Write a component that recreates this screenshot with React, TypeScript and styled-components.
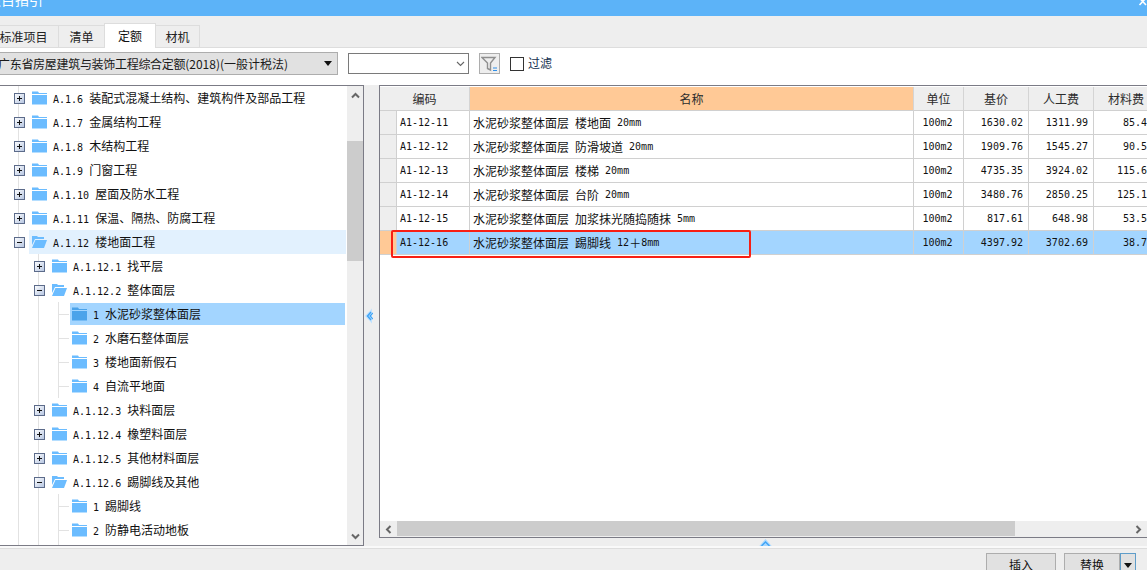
import React from "react";
import styled, { createGlobalStyle } from "styled-components";

const CJK = `"Noto Sans CJK SC", "Liberation Sans", sans-serif`;

const Global = createGlobalStyle`
  html, body { margin: 0; padding: 0; overflow: hidden; background: #eeeeee; }
  * { box-sizing: border-box; }
`;

const Page = styled.div`
  width: 1147px; height: 570px; overflow: hidden; display: flex; flex-direction: column;
  font-family: ${CJK}; font-size: 12px; color: #111; background: #eeeeee;
`;
const TitleBar = styled.div`
  flex: 0 0 16px; background: #5cb3f8; display: flex; justify-content: space-between; overflow: hidden;
`;
const TitleText = styled.div`
  color: #fff; font-size: 14px; line-height: 20px; margin: -11px 0 0 -13px; white-space: nowrap;
`;
const CloseMark = styled.svg`
  width: 9px; height: 7px; color: #fff;
`;
const TabStrip = styled.div`
  flex: 0 0 32px; display: flex; align-items: flex-end; margin-left: -12px;
  border-bottom: 1px solid #dddddd;
`;
const Tab = styled.div<{ $w: number; $active?: boolean }>`
  width: ${(p) => p.$w}px; height: ${(p) => (p.$active ? 25 : 22)}px;
  margin-bottom: ${(p) => (p.$active ? -1 : 0)}px;
  display: flex; align-items: center; justify-content: center; line-height: 20px;
  border: 1px solid #dddddd; border-bottom: none; margin-right: -1px;
  background: ${(p) => (p.$active ? "#fff" : "#eeeeee")};
  color: ${(p) => (p.$active ? "#111" : "#222")};
  position: relative;
`;
const Toolbar = styled.div`
  flex: 0 0 37px; background: #fff; display: flex; align-items: flex-start; padding-top: 4px;
`;
const Combo = styled.div`
  width: 339px; height: 23px; margin-left: -1px; background: #e1e1e1; border: 1px solid #adadad;
  display: flex; align-items: center; justify-content: space-between; padding: 0 4px 0 0; white-space: nowrap;
`;
const ComboText = styled.span` margin-left: -2px; color: #1a1a1a; `;
const ComboHead = styled.span` letter-spacing: -0.3px; `;
const Arrow = styled.svg` width: 8px; height: 5px; flex: none; margin-right: 1px; `;
const SelectBox = styled.div`
  width: 121px; height: 21px; margin: 1px 0 0 10px; background: #fff; border: 1px solid #7a7a7a;
  display: flex; align-items: center; justify-content: flex-end; padding-right: 3px;
`;
const FilterButton = styled.div`
  width: 21px; height: 21px; margin: 1px 0 0 10px; background: #eeeeee; border: 1px solid #adadad;
  display: flex; align-items: center; justify-content: center;
`;
const CheckBox = styled.div`
  width: 14px; height: 14px; margin: 5px 0 0 10px; background: #fff; border: 1px solid #333;
`;
const CheckLabel = styled.span` margin: 2px 0 0 4px; color: #14314f; `;

const Body = styled.div` flex: 0 0 461px; min-height: 0; overflow: hidden; display: flex; background: #eeeeee; `;
const LeftPanel = styled.div`
  width: 364px; flex: none; min-height: 0; display: flex; background: #fff; overflow: hidden;
  border-top: 1px solid #7b7b85; border-bottom: 1px solid #7b7b85; border-right: 1px solid #7b7b85;
`;
const Tree = styled.div`
  flex: 1; min-height: 0; padding: 0 1px 0 9px; overflow: hidden; display: flex; flex-direction: column;
`;
const Row = styled.div` flex: 0 0 24px; display: flex; align-items: stretch; `;
const Slot = styled.div<{ $branch?: boolean; $line?: boolean }>`
  width: 20px; flex: none; position: relative; display: flex; align-items: center; justify-content: center;
  &::before {
    content: ""; position: absolute; left: 9px; top: 0; bottom: 0; width: 1px;
    background: ${(p) => (p.$line ? "#e2e2e2" : "transparent")};
  }
  &::after {
    content: ""; position: absolute; left: 10px; right: 0; top: 12px; height: 1px;
    background: ${(p) => (p.$branch ? "#e2e2e2" : "transparent")};
  }
`;
const Toggle = styled.svg` width: 11px; height: 11px; position: relative; z-index: 1; `;
const Label = styled.div<{ $state?: "hover" | "selected"; $leaf?: boolean }>`
  flex: 1; display: flex; align-items: center; white-space: pre; gap: 6px;
  padding-left: ${(p) => (p.$leaf ? 2 : 3)}px; margin-left: ${(p) => (p.$leaf ? 1 : 0)}px;
  margin-top: ${(p) => (p.$state === "selected" ? 1 : 0)}px;
  margin-bottom: ${(p) => (p.$state === "selected" ? 1 : 0)}px;
  margin-right: ${(p) => (p.$state === "selected" ? 1 : 0)}px;
  background: ${(p) => (p.$state === "hover" ? "#e2f1fe" : p.$state === "selected" ? "#a3d5ff" : "transparent")};
`;
const TreeText = styled.span` margin-bottom: 2px; `;
const Folder = styled.svg` width: 15px; height: 14px; flex: none; `;
const Latin = styled.span`
  font-family: "DejaVu Sans Mono", "Liberation Mono", monospace; font-size: 10px; white-space: pre;
`;
const VScroll = styled.div`
  width: 16px; flex: none; background: #eeeeee; display: flex; flex-direction: column;
`;
const ScrollEnd = styled.div`
  flex: 0 0 18px; display: flex; align-items: center; justify-content: center;
`;
const VThumb = styled.div` flex: 0 0 120px; margin-top: 37px; margin-bottom: auto; background: #cccccc; `;
const Chevron = styled.svg` width: 9px; height: 9px; color: #666; `;

const Splitter = styled.div` width: 15px; flex: none; display: flex; align-items: center; `;
const RightColumn = styled.div` flex: 1; min-width: 0; min-height: 0; display: flex; flex-direction: column; `;
const RightPanel = styled.div`
  flex: 0 0 453px; display: flex; flex-direction: column; background: #fff; overflow: hidden;
  border-top: 1px solid #7b7b85; border-bottom: 1px solid #7b7b85; border-left: 1px solid #7b7b85;
  position: relative;
`;
const GridWrap = styled.div` flex: 1; min-height: 0; overflow: hidden; padding-top: 1px; `;
const GridTable = styled.div`
  display: grid; width: 779px;
  grid-template-columns: 17px 73px 444px 50px 65px 65px 65px;
  grid-auto-rows: 24px;
`;
const HeadCell = styled.div<{ $span?: number; $sort?: boolean }>`
  grid-column: span ${(p) => p.$span ?? 1};
  display: flex; align-items: center; justify-content: center; color: #2c2c2c;
  background: ${(p) => (p.$sort ? "#ffc996" : "#eeeeee")};
  border-right: 1px solid #d4d4d4; border-bottom: 1px solid #d0d0d0;
`;
const Marker = styled.div<{ $on?: boolean }>`
  background: ${(p) => (p.$on ? "#ffc996" : "#eeeeee")};
  border-right: 1px solid #d0d0d0; border-bottom: 1px solid #d0d0d0;
`;
const Cell = styled.div<{ $on?: boolean; $align?: "left" | "center" | "right" }>`
  display: flex; align-items: center; white-space: pre; padding: 0 5px 0 3px;
  justify-content: ${(p) => (p.$align === "right" ? "flex-end" : p.$align === "center" ? "center" : "flex-start")};
  background: ${(p) => (p.$on ? "#a3d5ff" : "#fff")};
  border-right: 1px solid #d0d0d0; border-bottom: 1px solid #d0d0d0;
`;
const RedMark = styled.div`
  position: absolute; left: 11px; top: 144px; width: 360px; height: 28px;
  border: 2px solid #f81f14; border-radius: 2px; pointer-events: none;
`;
const HScroll = styled.div` flex: 0 0 16px; display: flex; background: #eeeeee; `;
const HEnd = styled.div` flex: 0 0 17px; display: flex; align-items: center; justify-content: center; `;
const HThumb = styled.div` flex: 0 0 618px; height: 15px; background: #cccccc; margin-right: auto; `;
const BottomGrip = styled.div` flex: 1; min-height: 0; display: flex; justify-content: center; overflow: hidden; `;
const GripArrow = styled.svg` width: 15px; height: 9px; margin-top: 0; margin-left: 4px; flex: none; `;

const WhiteGap = styled.div` flex: 0 0 2px; background: #f9f9f9; `;
const Footer = styled.div`
  flex: 1; min-height: 0; border-top: 1px solid #dddddd; background: #eeeeee; display: flex; justify-content: flex-end;
  padding: 4px 11px 0 0; overflow: hidden;
`;
const Btn = styled.div<{ $w: number }>`
  width: ${(p) => p.$w}px; height: 23px; flex: none; background: #e1e1e1; border: 1px solid #adadad;
  display: flex; align-items: center; justify-content: center; color: #111;
`;
const SplitBtn = styled.div` display: flex; margin-left: 8px; `;
const DropBtn = styled.div`
  width: 16px; height: 23px; flex: none; background: #e1e1e1; border: 1px solid #5f9dc9;
  display: flex; align-items: flex-start; justify-content: center; padding-top: 9px;
`;

const Mixed = ({ text }: { text: string }) => (
  <>
    {text.split(/([\x00-\x7f]+)/).filter(Boolean).map((part, i) =>
      /^[\x00-\x7f]/.test(part) ? <Latin key={i}>{part}</Latin> : <span key={i}>{part}</span>
    )}
  </>
);

const ToggleIcon = ({ open }: { open: boolean }) => (
  <Toggle viewBox="0 0 11 11">
    <defs>
      <linearGradient id="tg" x1="0" y1="0" x2="1" y2="1">
        <stop offset="0" stopColor="#ffffff" />
        <stop offset="1" stopColor="#b4c4e0" />
      </linearGradient>
    </defs>
    <rect x="0.5" y="0.5" width="10" height="10" fill="url(#tg)" stroke="#5c6b8a" />
    <path d={open ? "M3 5.5h5" : "M3 5.5h5M5.5 3v5"} stroke="#111" fill="none" />
  </Toggle>
);

const FolderIcon = ({ open, dark }: { open?: boolean; dark?: boolean }) => {
  const c = dark ? "#4ba3ea" : "#6bbcff";
  return open ? (
    <Folder viewBox="0 0 15 14">
      <path d="M0 1h5l1 1h6v2H3L0 10z" fill={c} />
      <path d="M3.4 5H15l-3 8H0z" fill={c} />
    </Folder>
  ) : (
    <Folder viewBox="0 0 15 14">
      <path d="M0 0.5h6l1 1.5h8v1H0z" fill={c} />
      <path d="M0 4h15v9.5H0z" fill={c} />
    </Folder>
  );
};

type TreeItem = { depth: 0 | 1 | 2; text: string; open?: boolean; state?: "hover" | "selected" };
const treeItems: TreeItem[] = [
  { depth: 0, text: "A.1.6 装配式混凝土结构、建筑构件及部品工程" },
  { depth: 0, text: "A.1.7 金属结构工程" },
  { depth: 0, text: "A.1.8 木结构工程" },
  { depth: 0, text: "A.1.9 门窗工程" },
  { depth: 0, text: "A.1.10 屋面及防水工程" },
  { depth: 0, text: "A.1.11 保温、隔热、防腐工程" },
  { depth: 0, text: "A.1.12 楼地面工程", open: true, state: "hover" },
  { depth: 1, text: "A.1.12.1 找平层" },
  { depth: 1, text: "A.1.12.2 整体面层", open: true },
  { depth: 2, text: "1 水泥砂浆整体面层", state: "selected" },
  { depth: 2, text: "2 水磨石整体面层" },
  { depth: 2, text: "3 楼地面新假石" },
  { depth: 2, text: "4 自流平地面" },
  { depth: 1, text: "A.1.12.3 块料面层" },
  { depth: 1, text: "A.1.12.4 橡塑料面层" },
  { depth: 1, text: "A.1.12.5 其他材料面层" },
  { depth: 1, text: "A.1.12.6 踢脚线及其他", open: true },
  { depth: 2, text: "1 踢脚线" },
  { depth: 2, text: "2 防静电活动地板" },
];

const rows = [
  ["A1-12-11", "水泥砂浆整体面层 楼地面 20mm", "100m2", "1630.02", "1311.99", "85.47"],
  ["A1-12-12", "水泥砂浆整体面层 防滑坡道 20mm", "100m2", "1909.76", "1545.27", "90.53"],
  ["A1-12-13", "水泥砂浆整体面层 楼梯 20mm", "100m2", "4735.35", "3924.02", "115.60"],
  ["A1-12-14", "水泥砂浆整体面层 台阶 20mm", "100m2", "3480.76", "2850.25", "125.12"],
  ["A1-12-15", "水泥砂浆整体面层 加浆抹光随捣随抹 5mm", "100m2", "817.61", "648.98", "53.51"],
  ["A1-12-16", "水泥砂浆整体面层 踢脚线 12＋8mm", "100m2", "4397.92", "3702.69", "38.75"],
];

const ChevUp = () => (
  <Chevron viewBox="0 0 9 9"><path d="M1 6.5l3.5-3.5L8 6.5" fill="none" stroke="currentColor" strokeWidth="2" /></Chevron>
);
const ChevDown = () => (
  <Chevron viewBox="0 0 9 9"><path d="M1 2.5L4.5 6 8 2.5" fill="none" stroke="currentColor" strokeWidth="2" /></Chevron>
);
const ChevLeft = () => (
  <Chevron viewBox="0 0 9 9"><path d="M6.5 1L3 4.5 6.5 8" fill="none" stroke="currentColor" strokeWidth="2" /></Chevron>
);
const ChevRight = () => (
  <Chevron viewBox="0 0 9 9"><path d="M2.5 1L6 4.5 2.5 8" fill="none" stroke="currentColor" strokeWidth="2" /></Chevron>
);

export default function App() {
  return (
    <Page>
      <Global />
      <TitleBar>
        <TitleText>项目指引</TitleText>
        <CloseMark viewBox="0 0 9 7">
          <path d="M1.5 -2L8 5M8 -2L1.5 5" stroke="currentColor" strokeWidth="1.6" fill="none" />
        </CloseMark>
      </TitleBar>
      <TabStrip>
        <Tab $w={71}>标准项目</Tab>
        <Tab $w={47}>清单</Tab>
        <Tab $w={52} $active>定额</Tab>
        <Tab $w={45}>材机</Tab>
      </TabStrip>
      <Toolbar>
        <Combo>
          <ComboText><ComboHead>广东省房屋建筑与装饰工程综合定额</ComboHead>(2018)(一般计税法)</ComboText>
          <Arrow viewBox="0 0 8 5"><path d="M0 0h8L4 5z" fill="#111" /></Arrow>
        </Combo>
        <SelectBox>
          <Chevron viewBox="0 0 9 9">
            <path d="M1 3l3.5 3.5L8 3" fill="none" stroke="currentColor" strokeWidth="1.1" />
          </Chevron>
        </SelectBox>
        <FilterButton>
          <svg width="17" height="16" viewBox="0 0 17 16">
            <path d="M1 1.5h13L9.5 7v7l-3-1.5V7z" fill="none" stroke="#8f8f8f" strokeWidth="1.4" />
            <path d="M12 12h4M12 14.5h4" stroke="#2f8fe8" strokeWidth="1" />
          </svg>
        </FilterButton>
        <CheckBox />
        <CheckLabel>过滤</CheckLabel>
      </Toolbar>
      <Body>
        <LeftPanel>
          <Tree>
            {treeItems.map((it) => (
              <Row key={it.text}>
                <Slot $line>{it.depth === 0 && <ToggleIcon open={!!it.open} />}</Slot>
                {it.depth >= 1 && <Slot $line>{it.depth === 1 && <ToggleIcon open={!!it.open} />}</Slot>}
                {it.depth === 2 && <Slot $line $branch />}
                <Label $state={it.state} $leaf={it.depth === 2}>
                  <FolderIcon open={it.open} dark={it.state === "selected"} />
                  <TreeText><Mixed text={it.text} /></TreeText>
                </Label>
              </Row>
            ))}
            <Row>
              <Slot $line />
              <Slot $line />
              <Slot $line />
            </Row>
          </Tree>
          <VScroll>
            <ScrollEnd><ChevUp /></ScrollEnd>
            <VThumb />
            <ScrollEnd><ChevDown /></ScrollEnd>
          </VScroll>
        </LeftPanel>
        <Splitter>
          <svg width="9" height="16" viewBox="0 0 9 16">
            <path d="M8 0.5L1 8l7 7.5z" fill="#bfe2ff" />
            <path d="M7 4L3.5 8 7 12" fill="none" stroke="#3ea3f5" strokeWidth="1.4" />
            <path d="M9 5L6 8l3 3" fill="none" stroke="#3ea3f5" strokeWidth="1.2" />
          </svg>
        </Splitter>
        <RightColumn>
          <RightPanel>
            <GridWrap>
              <GridTable>
                <HeadCell $span={2}>编码</HeadCell>
                <HeadCell $sort>名称</HeadCell>
                <HeadCell>单位</HeadCell>
                <HeadCell>基价</HeadCell>
                <HeadCell>人工费</HeadCell>
                <HeadCell>材料费</HeadCell>
                {rows.map((r, i) => {
                  const on = i === rows.length - 1;
                  return (
                    <React.Fragment key={r[0]}>
                      <Marker $on={on} />
                      <Cell $on={on}><Mixed text={r[0]} /></Cell>
                      <Cell $on={on}><Mixed text={r[1]} /></Cell>
                      <Cell $on={on} $align="center"><Mixed text={r[2]} /></Cell>
                      <Cell $on={on} $align="right"><Mixed text={r[3]} /></Cell>
                      <Cell $on={on} $align="right"><Mixed text={r[4]} /></Cell>
                      <Cell $on={on} $align="right"><Mixed text={r[5]} /></Cell>
                    </React.Fragment>
                  );
                })}
              </GridTable>
            </GridWrap>
            <HScroll>
              <HEnd><ChevLeft /></HEnd>
              <HThumb />
              <HEnd><ChevRight /></HEnd>
            </HScroll>
            <RedMark />
          </RightPanel>
          <BottomGrip>
            <GripArrow viewBox="0 0 15 9">
              <path d="M0.5 9L7.5 1l7 8z" fill="#a9d8ff" />
              <path d="M3.5 8l4-4 4 4" fill="none" stroke="#3ea3f5" strokeWidth="1.3" />
            </GripArrow>
          </BottomGrip>
        </RightColumn>
      </Body>
      <WhiteGap />
      <Footer>
        <Btn $w={70}>插入</Btn>
        <SplitBtn>
          <Btn $w={56}>替换</Btn>
          <DropBtn>
            <Arrow viewBox="0 0 8 5"><path d="M0 0h8L4 5z" fill="#111" /></Arrow>
          </DropBtn>
        </SplitBtn>
      </Footer>
    </Page>
  );
}
